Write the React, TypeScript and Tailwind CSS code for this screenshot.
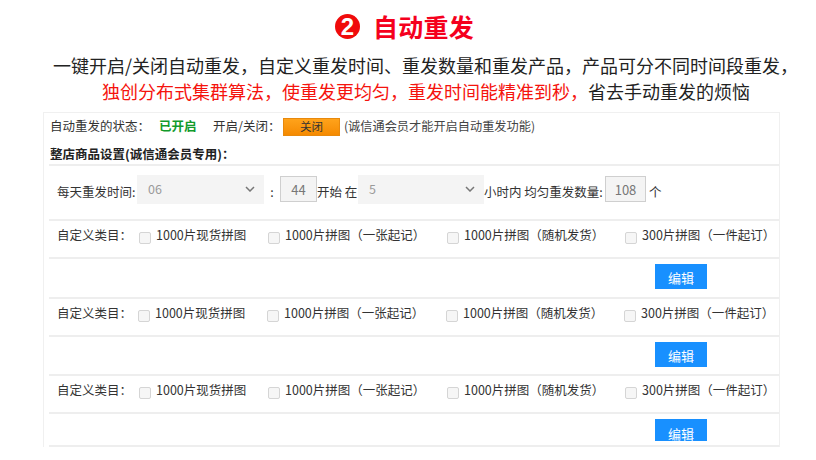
const cjk = "font-['Noto_Sans_CJK_SC','Liberation_Sans',sans-serif]";

const labels = ["1000片现货拼图", "1000片拼图（一张起记）", "1000片拼图（随机发货）", "300片拼图（一件起订）"];

function Category({ labelWidth }: { labelWidth: string }) {
  return (
    <div className="flex h-[38px] items-center border-b-2 border-[#eeeeee] pb-[7px] pl-2">
      <span className={`shrink-0 text-[#333] ${labelWidth}`}>自定义类目：</span>
      <div className="grid grid-cols-[129px_179px_178px_150px] items-center">
        {labels.map((label) => (
          <div key={label} className="flex items-center gap-[5px]">
            <span className="mt-[5px] h-3 w-3 shrink-0 rounded-[2px] border border-[#d5d5d5] bg-[#f6f6f6]" />
            <span className="whitespace-nowrap text-[#333]">{label}</span>
          </div>
        ))}
      </div>
    </div>
  );
}

function EditRow({ height, buttonClass }: { height: string; buttonClass: string }) {
  return (
    <div className={`flex justify-end border-b-2 border-[#eeeeee] pt-[5px] pr-[72px] ${height}`}>
      <button
        type="button"
        className={`w-[52px] shrink-0 bg-[#1890ff] text-[13px] leading-none text-white ${buttonClass}`}
      >
        编辑
      </button>
    </div>
  );
}

function FakeSelect({ value, width }: { value: string; width: string }) {
  return (
    <div className={`mb-[7px] flex h-[29px] items-center justify-between bg-[#f4f4f4] pr-[9px] pl-[11px] text-[#9a9a9a] ${width}`}>
      <span>{value}</span>
      <svg width="10" height="6" viewBox="0 0 10 6" fill="none" stroke="#777" strokeWidth="1.5">
        <path d="M1 1l4 4 4-4" />
      </svg>
    </div>
  );
}

function NumberBox({ value, width }: { value: string; width: string }) {
  return (
    <span className={`mb-[7px] flex h-[26px] items-center justify-center border border-[#cfcfcf] bg-[#f4f4f4] text-[13px] text-[#777] ${width}`}>
      {value}
    </span>
  );
}

export default function App() {
  return (
    <div className={`h-[460px] w-[816px] overflow-hidden bg-white ${cjk}`}>
      <div className="flex h-[53px] items-center justify-center gap-[13px] pr-[7px]">
        <span className="flex h-[25px] w-[25px] items-center justify-center rounded-full bg-[#f00b0b] font-['Liberation_Sans',sans-serif] text-[24px] leading-none font-bold text-white">
          2
        </span>
        <h1 className="text-[25px] leading-none font-bold tracking-[0.25px] text-[#f5001d]">自动重发</h1>
      </div>
      <p className="mt-[-1px] pl-[53px] text-[18px] leading-[26px] whitespace-nowrap text-[#222]">
        一键开启/关闭自动重发，自定义重发时间、重发数量和重发产品，产品可分不同时间段重发，
      </p>
      <p className="pl-[102px] text-[18px] leading-[26px] whitespace-nowrap text-[#222]">
        <span className="text-[#f5130d]">独创分布式集群算法，使重发更均匀，重发时间能精准到秒，</span>省去手动重发的烦恼
      </p>
      <section className="mt-[8px] ml-[43px] h-[335px] w-[737px] overflow-hidden border-x border-t border-[#f0f0f0] pl-[5px] text-[12.5px] leading-none">
        <div className="flex h-[27px] items-center pl-[1px] text-[#333]">
          <span className="w-[109px] whitespace-nowrap">自动重发的状态：</span>
          <span className="w-[54px] font-bold text-[#119a2b]">已开启</span>
          <span className="w-[70px] whitespace-nowrap">开启/关闭：</span>
          <button
            type="button"
            className="h-[18px] w-[57px] border border-[#e8890c] bg-linear-to-b from-[#ffa31a] to-[#f58a00] text-[11.5px] text-[#333]"
          >
            关闭
          </button>
          <span className="ml-[4px] text-[12.2px] whitespace-nowrap text-[#444]">(诚信通会员才能开启自动重发功能)</span>
        </div>
        <div className="flex h-[26px] items-start border-b-2 border-[#eeeeee] pt-[8px] pl-[1px] font-bold whitespace-nowrap text-[#222]">
          整店商品设置(诚信通会员专用)：
        </div>
        <div className="flex h-[55px] items-center border-b-2 border-[#eeeeee] pl-[8px] whitespace-nowrap text-[#333]">
          <span className="w-[80px]">每天重发时间:</span>
          <FakeSelect value="06" width="w-[127px]" />
          <span className="w-[16px] text-center">:</span>
          <NumberBox value="44" width="w-[37px]" />
          <span className="w-[41px]">开始 在</span>
          <FakeSelect value="5" width="w-[126px]" />
          <span className="w-[121px]">小时内 均匀重发数量:</span>
          <NumberBox value="108" width="w-[41px]" />
          <span className="ml-[3px]">个</span>
        </div>
        <Category labelWidth="w-[82px]" />
        <EditRow height="h-[40px]" buttonClass="h-[25px] pt-[1px]" />
        <Category labelWidth="w-[81px]" />
        <EditRow height="h-[39px]" buttonClass="h-[25px] pt-[1px]" />
        <Category labelWidth="w-[82px]" />
        <EditRow height="h-[33px]" buttonClass="h-[22px] pt-[6px]" />
      </section>
    </div>
  );
}
